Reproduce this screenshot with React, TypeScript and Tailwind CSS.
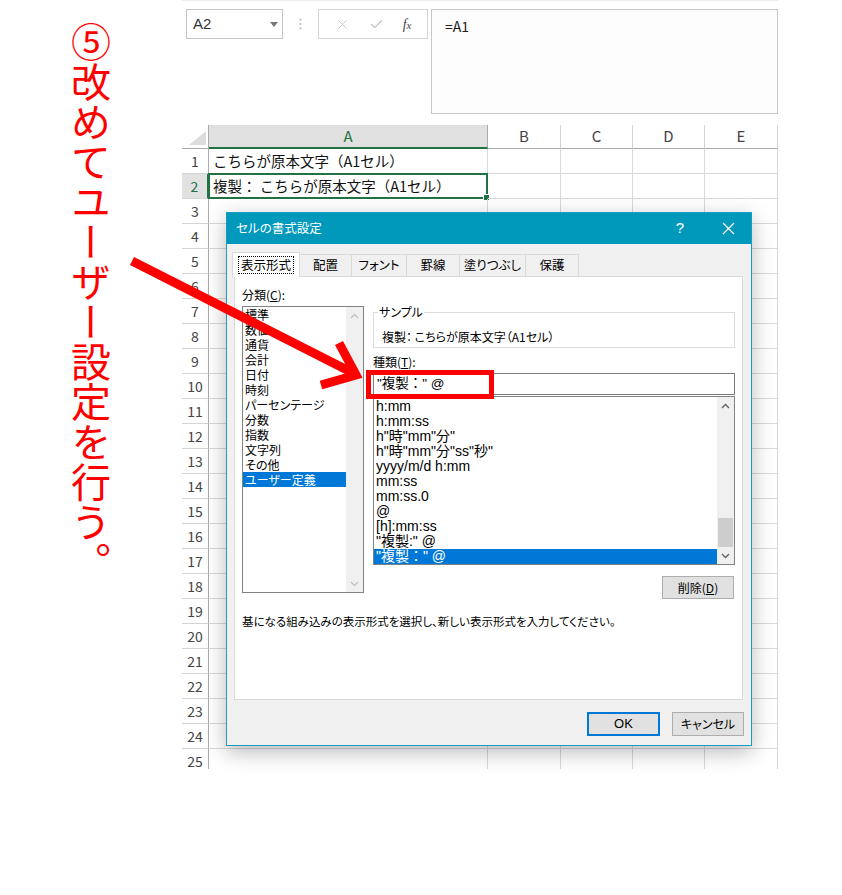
import { Check, X } from "lucide-react";

const jp = "font-['Noto_Sans_CJK_JP',sans-serif]";
const ui = "font-['Liberation_Sans','Noto_Sans_CJK_JP',sans-serif]";
const palt = "[font-feature-settings:'palt']";

const columns = [
  { label: "A", width: "w-[279px]" },
  { label: "B", width: "w-[73px]" },
  { label: "C", width: "w-[72px]" },
  { label: "D", width: "w-[72px]" },
  { label: "E", width: "w-[73px]" },
];

const rows = Array.from({ length: 25 }, (_, i) => i + 1);

const cellText: Record<number, string> = {
  1: "こちらが原本文字（A1セル）",
  2: "複製： こちらが原本文字（A1セル）",
};

const tabs = ["表示形式", "配置", "フォント", "罫線", "塗りつぶし", "保護"];
const tabWidths = ["w-[68px]", "w-[52px]", "w-[55px]", "w-[53px]", "w-[66px]", "w-[53px]"];

const categories = [
  "標準",
  "数値",
  "通貨",
  "会計",
  "日付",
  "時刻",
  "パーセンテージ",
  "分数",
  "指数",
  "文字列",
  "その他",
  "ユーザー定義",
];

const formats = [
  "h:mm",
  "h:mm:ss",
  'h"時"mm"分"',
  'h"時"mm"分"ss"秒"',
  "yyyy/m/d h:mm",
  "mm:ss",
  "mm:ss.0",
  "@",
  "[h]:mm:ss",
  '"複製:" @',
  '"複製：" @',
];

function Chevron({ up, color }: { up?: boolean; color: string }) {
  return (
    <svg width="9" height="6" viewBox="0 0 9 6">
      <polyline
        points={up ? "1,5 4.5,1.5 8,5" : "1,1 4.5,4.5 8,1"}
        fill="none"
        stroke={color}
        strokeWidth="1.3"
      />
    </svg>
  );
}

function FormulaBar() {
  return (
    <div className="flex items-start mt-[8px] h-[105px]">
      {/* Name box */}
      <div className="ml-[4px] w-[97px] h-[30px] border border-[#c6c6c6] flex items-center pl-[6px] pr-[4px] text-[15px] text-[#333]">
        <span className={ui}>A2</span>
        <svg className="ml-auto" width="8" height="5" viewBox="0 0 8 5">
          <polygon points="0,0 8,0 4,5" fill="#777" />
        </svg>
      </div>
      <div className="w-[35px] h-[30px] flex items-center justify-center">
        <svg width="3" height="12" viewBox="0 0 3 12">
          <circle cx="1.5" cy="1.5" r="1" fill="#b5b5b5" />
          <circle cx="1.5" cy="6" r="1" fill="#b5b5b5" />
          <circle cx="1.5" cy="10.5" r="1" fill="#b5b5b5" />
        </svg>
      </div>
      {/* Cancel / enter / function buttons */}
      <div className="w-[110px] h-[30px] border border-[#d4d4d4] flex items-center justify-around px-[6px]">
        <X size={15} strokeWidth={1.5} color="#c4c4c4" />
        <Check size={15} strokeWidth={2.2} color="#c4c4c4" />
        <span className="font-['Liberation_Serif',serif] italic text-[14px] text-[#444]">
          f<span className="text-[11px]">x</span>
        </span>
      </div>
      <div className="ml-[3px] flex-1 h-[105px] border border-[#c6c6c6] bg-[#fdfdfd] pl-[13px] pt-[4px]">
        <span className={`${jp} text-[14px] text-[#222]`}>=A1</span>
      </div>
    </div>
  );
}

function Sheet() {
  return (
    <div className={`mt-[11px] h-[644px] overflow-hidden ${jp}`}>
      {/* Column headers */}
      <div className="flex h-[24px]">
        <div className="w-[27px] border-r border-b border-[#ababab] relative">
          <svg className="absolute right-[2px] bottom-[3px]" width="17" height="14" viewBox="0 0 17 14">
            <polygon points="17,0 17,14 0,14" fill="#dcdcdc" />
          </svg>
        </div>
        {columns.map((c) =>
          c.label === "A" ? (
            <div
              key={c.label}
              className={`${c.width} flex items-center justify-center bg-[#e1e1e1] border-r border-[#ababab] border-b-2 border-b-[#217346] text-[15px] text-[#217346]`}
            >
              {c.label}
            </div>
          ) : (
            <div
              key={c.label}
              className={`${c.width} flex items-center justify-center border-r border-[#d4d4d4] border-b border-b-[#ababab] text-[15px] text-[#444]`}
            >
              {c.label}
            </div>
          )
        )}
      </div>

      {rows.map((r) => (
        <div key={r} className="flex h-[25px] shrink-0">
          {r === 2 ? (
            <div className="w-[27px] flex items-center justify-center bg-[#e1e1e1] border-r-2 border-[#217346] border-b border-b-[#d4d4d4] text-[14px] text-[#217346]">
              {r}
            </div>
          ) : (
            <div className="w-[27px] flex items-center justify-center border-r border-[#ababab] border-b border-b-[#d4d4d4] text-[14px] text-[#444]">
              {r}
            </div>
          )}
          {columns.map((c) => (
            <div
              key={c.label}
              className={`${c.width} relative flex items-center pl-[4px] border-r border-b border-[#d9d9d9] text-[14.5px] text-[#111] whitespace-pre`}
            >
              {c.label === "A" && cellText[r]}
              {c.label === "A" && r === 2 && (
                <div className="absolute -left-[1px] -top-[1px] -right-[1px] -bottom-[1px] border-2 border-[#217346]">
                  <div className="absolute -right-[4px] -bottom-[4px] w-[7px] h-[7px] bg-[#217346] border border-white" />
                </div>
              )}
            </div>
          ))}
        </div>
      ))}
    </div>
  );
}

function ListScrollbar({ enabled }: { enabled?: boolean }) {
  const color = enabled ? "#606060" : "#c2c2c2";
  return (
    <div className="w-[17px] bg-[#f0f0f0] flex flex-col">
      <div className="h-[17px] flex items-center justify-center">
        <Chevron up color={color} />
      </div>
      <div className="flex-1 flex flex-col justify-end">
        {enabled && <div className="h-[29px] mx-[1px] bg-[#cdcdcd]" />}
      </div>
      <div className="h-[17px] flex items-center justify-center">
        <Chevron color={color} />
      </div>
    </div>
  );
}

function FormatDialog() {
  return (
    <div
      className={`absolute left-[226px] top-[212px] w-[526px] h-[534px] flex flex-col bg-[#f0f0f0] border border-[#1a9cc2] shadow-[0_6px_20px_rgba(0,0,0,0.28)] text-[12px] text-black ${jp} ${palt}`}
    >
      {/* Title bar */}
      <div className="h-[31px] shrink-0 bg-[#0099bc] flex items-center pl-[9px] text-white">
        <span className="text-[12.5px]">セルの書式設定</span>
        <span className={`ml-auto text-[15px] ${ui}`}>?</span>
        <svg className="ml-[38px] mr-[16px]" width="13" height="13" viewBox="0 0 13 13">
          <path d="M1 1 L12 12 M12 1 L1 12" stroke="#fff" strokeWidth="1.2" />
        </svg>
      </div>

      <div className="flex-1 flex flex-col pl-[7px] pr-[8px] pt-[8px] pb-[9px]">
        {/* Tabs */}
        <div className="flex items-end h-[24px] -ml-[2px]">
          {tabs.map((t, i) =>
            i === 0 ? (
              <div
                key={t}
                className={`${tabWidths[i]} h-[25px] -mb-px relative z-10 bg-white border-l border-t border-r border-[#d9d9d9] flex items-center justify-center`}
              >
                <span className="border border-dotted border-black px-[2px] leading-[16px] text-[12.5px]">
                  {t}
                </span>
              </div>
            ) : (
              <div
                key={t}
                className={`${tabWidths[i]} h-[22px] border-t border-r border-[#d9d9d9] flex items-center justify-center text-[12.5px]`}
              >
                {t}
              </div>
            )
          )}
        </div>

        {/* Tab page */}
        <div className="h-[424px] bg-white border border-[#d9d9d9] pl-[7px] flex flex-col">
          <div className="flex gap-[9px]">
            <div className="w-[122px] pt-[10px] flex flex-col">
              <div className="leading-[16px] mb-[3px]">
                分類(<span className="underline">C</span>):
              </div>
              <div className="h-[287px] border border-[#828282] flex">
                <div className="flex-1 flex flex-col">
                  {categories.map((c, i) => (
                    <div
                      key={c}
                      className={`h-[15px] leading-[15px] px-[2px] whitespace-nowrap ${
                        i === categories.length - 1 ? "bg-[#0078d7] text-white" : ""
                      }`}
                    >
                      {c}
                    </div>
                  ))}
                </div>
                <ListScrollbar />
              </div>
            </div>

            <div className="w-[362px] pt-[27px] flex flex-col">
              <fieldset className="border border-[#dcdcdc] pl-[8px] pt-[9px] pb-[2px]">
                <legend className="-ml-[4px] px-[1px] leading-[16px]">サンプル</legend>
                <div className="leading-[16px] whitespace-pre">複製： こちらが原本文字（A1セル）</div>
              </fieldset>

              <div className="mt-[6px] leading-[16px] mb-[3px]">
                種類(<span className="underline">T</span>):
              </div>
              <div className="relative h-[22px] border border-[#7a7a7a] flex items-center pl-[3px]">
                <span className={`${ui} text-[13.5px] whitespace-pre [font-feature-settings:normal]`}>
                  "複製：" @
                </span>
                <div className="absolute -left-[8px] -top-[4px] w-[128px] h-[29px] border-[5px] border-[#ff0000]" />
              </div>
              <div className="mt-[1px] h-[169px] border border-[#828282] flex">
                <div className={`flex-1 flex flex-col pt-[2px] ${ui} text-[14px]`}>
                  {formats.map((f, i) => (
                    <div
                      key={f}
                      className={`h-[15px] leading-[15px] pl-[2px] whitespace-pre ${
                        i === formats.length - 1
                          ? "bg-[#0078d7] text-white [font-feature-settings:normal]"
                          : ""
                      }`}
                    >
                      {f}
                    </div>
                  ))}
                </div>
                <ListScrollbar enabled />
              </div>

              <button className="self-end mr-[1px] mt-[11px] w-[72px] h-[23px] bg-[#e1e1e1] border border-[#adadad] flex items-center justify-center">
                削除(<span className="underline">D</span>)
              </button>
            </div>
          </div>

          <p className="mt-[14px] leading-[16px] text-[11.5px]">
            基になる組み込みの表示形式を選択し、新しい表示形式を入力してください。
          </p>
        </div>

        {/* Footer buttons */}
        <div className="mt-[12px] flex justify-end gap-[12px] -mr-[1px]">
          <button className={`w-[73px] h-[24px] bg-[#e1e1e1] border-2 border-[#0078d7] ${ui} text-[13px]`}>
            OK
          </button>
          <button className="w-[72px] h-[24px] bg-[#e1e1e1] border border-[#adadad] text-[12px]">
            キャンセル
          </button>
        </div>
      </div>
    </div>
  );
}

export default function App() {
  return (
    <div className="relative w-[842px] h-[895px] bg-white overflow-hidden flex">
      {/* Caption written top to bottom */}
      <div className="w-[182px] shrink-0 pl-[71px] pt-[22px]">
        <div
          className={`h-[580px] [writing-mode:vertical-rl] text-[40px] leading-[40px] text-[#ff0000] ${jp}`}
        >
          ⑤改めてユーザー設定を行う。
        </div>
      </div>

      <div className="w-[596px] shrink-0 flex flex-col border-t border-[#ececec]">
        <FormulaBar />
        <Sheet />
      </div>

      <FormatDialog />

      {/* Pointer arrow */}
      <svg
        className="absolute left-0 top-0 pointer-events-none z-20"
        width="842"
        height="895"
        viewBox="0 0 842 895"
      >
        <line x1="132" y1="261" x2="353" y2="373" stroke="#ff0000" strokeWidth="9" />
        <polyline
          points="339,343 356,375 321,385"
          fill="none"
          stroke="#ff0000"
          strokeWidth="9"
          strokeLinejoin="miter"
        />
      </svg>
    </div>
  );
}
